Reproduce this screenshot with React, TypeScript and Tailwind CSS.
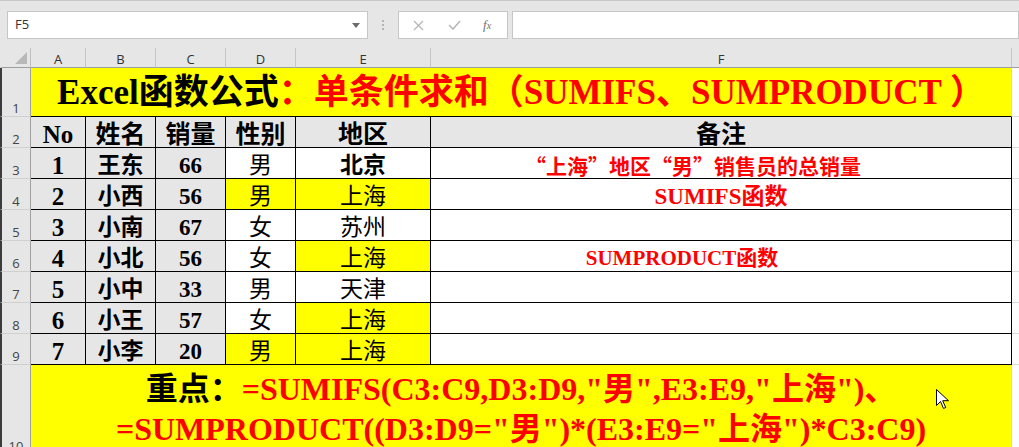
import React from 'react'

const serif = "font-['Liberation_Serif','Noto_Sans_CJK_SC',serif]"
const cjk = "font-['Noto_Sans_CJK_SC',sans-serif]"
const ui = "font-['Open_Sans','Liberation_Sans',sans-serif]"

type Row = {
  no: number
  name: string
  sales: number
  sex: string
  area: string
  sexHi?: boolean
  areaHi?: boolean
  areaBold?: boolean
  note?: React.ReactNode
}

const rows: Row[] = [
  {
    no: 1,
    name: '王东',
    sales: 66,
    sex: '男',
    area: '北京',
    areaBold: true,
    note: <span className={`${cjk} pr-[56px] text-[21px]`}>“上海”地区“男”销售员的总销量</span>,
  },
  { no: 2, name: '小西', sales: 56, sex: '男', area: '上海', sexHi: true, areaHi: true, note: <span className="text-[23px]">SUMIFS函数</span> },
  { no: 3, name: '小南', sales: 67, sex: '女', area: '苏州' },
  {
    no: 4,
    name: '小北',
    sales: 56,
    sex: '女',
    area: '上海',
    areaHi: true,
    note: <span className="pr-[78px] text-[21px]">SUMPRODUCT函数</span>,
  },
  { no: 5, name: '小中', sales: 33, sex: '男', area: '天津' },
  { no: 6, name: '小王', sales: 57, sex: '女', area: '上海', areaHi: true },
  { no: 7, name: '小李', sales: 20, sex: '男', area: '上海', sexHi: true, areaHi: true },
]

const cols = ['A', 'B', 'C', 'D', 'E', 'F']

function RowHead({ n }: { n: number }) {
  return (
    <div
      className={`${ui} flex items-end justify-center border-b border-l-2 border-r border-b-[#d0d0d0] border-l-[#3c3c3c] border-r-[#a0a0a0] bg-[#e6e6e6] pb-[1px] text-[13px] leading-none text-[#444]`}
    >
      {n}
    </div>
  )
}

function Cell({ children, className = '' }: { children?: React.ReactNode; className?: string }) {
  return (
    <div className={`flex items-center justify-center border-b border-r border-black pt-[4px] leading-none ${className}`}>
      {children}
    </div>
  )
}

function Rest() {
  return <div className="border-b border-[#dadada] bg-[#fdfdfd]" />
}

export default function App() {
  return (
    <div className="relative h-[447px] w-[1019px] overflow-hidden bg-[#e6e6e6]">
      {/* formula bar */}
      <div className="flex h-[48px] items-start border-t border-[#c8c8c8] pt-[10px]">
        <div className="ml-[7px] flex h-[28px] w-[361px] items-center justify-between border border-[#c6c6c6] bg-white pl-[7px] pr-[7px]">
          <span className={`${ui} text-[13px] text-[#333]`}>F5</span>
          <svg width="8" height="5" viewBox="0 0 8 5">
            <path d="M0 0h8L4 5z" fill="#6b6b6b" />
          </svg>
        </div>
        <div className="flex h-[28px] w-[30px] flex-col items-center justify-center gap-[2px]">
          <span className="h-[2px] w-[2px] bg-[#b4b4b4]" />
          <span className="h-[2px] w-[2px] bg-[#b4b4b4]" />
          <span className="h-[2px] w-[2px] bg-[#b4b4b4]" />
        </div>
        <div className="flex h-[28px] w-[110px] items-center border border-[#c6c6c6] bg-white">
          <svg className="ml-[14px]" width="11" height="11" viewBox="0 0 11 11">
            <path d="M1 1l9 9M10 1l-9 9" stroke="#b8b8b8" strokeWidth="1.4" />
          </svg>
          <svg className="ml-[24px]" width="13" height="10" viewBox="0 0 13 10">
            <path d="M1 5l4 4 7-8" stroke="#b8b8b8" strokeWidth="1.6" fill="none" />
          </svg>
          <span className="ml-[22px] font-['Liberation_Serif',serif] text-[13px] italic text-[#6f6f6f]">
            f<span className="text-[10px]">x</span>
          </span>
        </div>
        <div className="ml-[4px] h-[28px] flex-1 border border-[#c6c6c6] bg-white" />
      </div>

      {/* sheet */}
      <div className="grid grid-cols-[31px_55px_70px_70px_70px_135px_581px_1fr] grid-rows-[20px_49px_repeat(8,31px)_90px]">
        {/* column headers */}
        <div className="flex items-end justify-end border-b border-l-2 border-r border-b-[#9e9e9e] border-l-[#e6e6e6] border-r-[#c0c0c0] pb-[3px] pr-[3px]">
          <svg width="12" height="12" viewBox="0 0 12 12">
            <path d="M12 0v12H0z" fill="#b8b8b8" />
          </svg>
        </div>
        {cols.map((c) => (
          <div
            key={c}
            className={`${ui} flex items-end justify-center border-b border-r border-b-[#9e9e9e] border-r-[#c6c6c6] pb-[1px] text-[13px] leading-none text-[#333]`}
          >
            {c}
          </div>
        ))}
        <div className="border-b border-b-[#9e9e9e]" />

        {/* row 1 title */}
        <RowHead n={1} />
        <div
          className={`${serif} col-span-6 flex items-center justify-center border-b border-r border-b-black border-r-[#d4d4d4] bg-[#ffff00] pt-[1px] text-[35px] font-bold leading-none`}
        >
          <span className="text-black">Excel函数公式</span>
          <span className="text-[#ff0000]">：单条件求和（SUMIFS、SUMPRODUCT ）</span>
        </div>
        <Rest />

        {/* row 2 header */}
        <RowHead n={2} />
        <Cell className={`${serif} text-[25px] font-bold`}>No</Cell>
        <Cell className={`${serif} text-[25px] font-bold`}>姓名</Cell>
        <Cell className={`${serif} text-[25px] font-bold`}>销量</Cell>
        <Cell className={`${serif} text-[25px] font-bold`}>性别</Cell>
        <Cell className={`${serif} text-[25px] font-bold`}>地区</Cell>
        <Cell className={`${serif} text-[25px] font-bold`}>备注</Cell>
        <Rest />

        {rows.map((r) => (
          <React.Fragment key={r.no}>
            <RowHead n={r.no + 2} />
            <Cell className={`${serif} text-[25px] font-bold`}>{r.no}</Cell>
            <Cell className={`${serif} text-[23px] font-bold`}>{r.name}</Cell>
            <Cell className={`${serif} text-[23px] font-bold`}>{r.sales}</Cell>
            <Cell className={`${serif} text-[23px] ${r.sexHi ? 'bg-[#ffff00]' : 'bg-white'}`}>{r.sex}</Cell>
            <Cell className={`${serif} text-[23px] ${r.areaBold ? 'font-bold' : ''} ${r.areaHi ? 'bg-[#ffff00]' : 'bg-white'}`}>
              {r.area}
            </Cell>
            <Cell className={`${serif} bg-white text-[20px] font-bold text-[#ff0000]`}>{r.note}</Cell>
            <Rest />
          </React.Fragment>
        ))}

        {/* row 10 key formulas */}
        <RowHead n={10} />
        <div
          className={`${serif} col-span-6 flex flex-col items-center border-r border-r-[#d4d4d4] bg-[#ffff00] pt-[4px] font-bold leading-[40px] text-[#ff0000]`}
        >
          <div className="text-[32px]">
            <span className="text-black">重点：</span>=SUMIFS(C3:C9,D3:D9,"男",E3:E9,"上海")、
          </div>
          <div className="text-[32px]">=SUMPRODUCT((D3:D9="男")*(E3:E9="上海")*C3:C9)</div>
        </div>
        <Rest />
      </div>

      {/* mouse pointer */}
      <svg className="absolute left-[936px] top-[389px]" width="13" height="21" viewBox="0 0 13 21">
        <path d="M0.5 0.5v16l4-4 3 7 2.2-1-3-6.8h5.8z" fill="white" stroke="black" strokeWidth="1" />
      </svg>
    </div>
  )
}
